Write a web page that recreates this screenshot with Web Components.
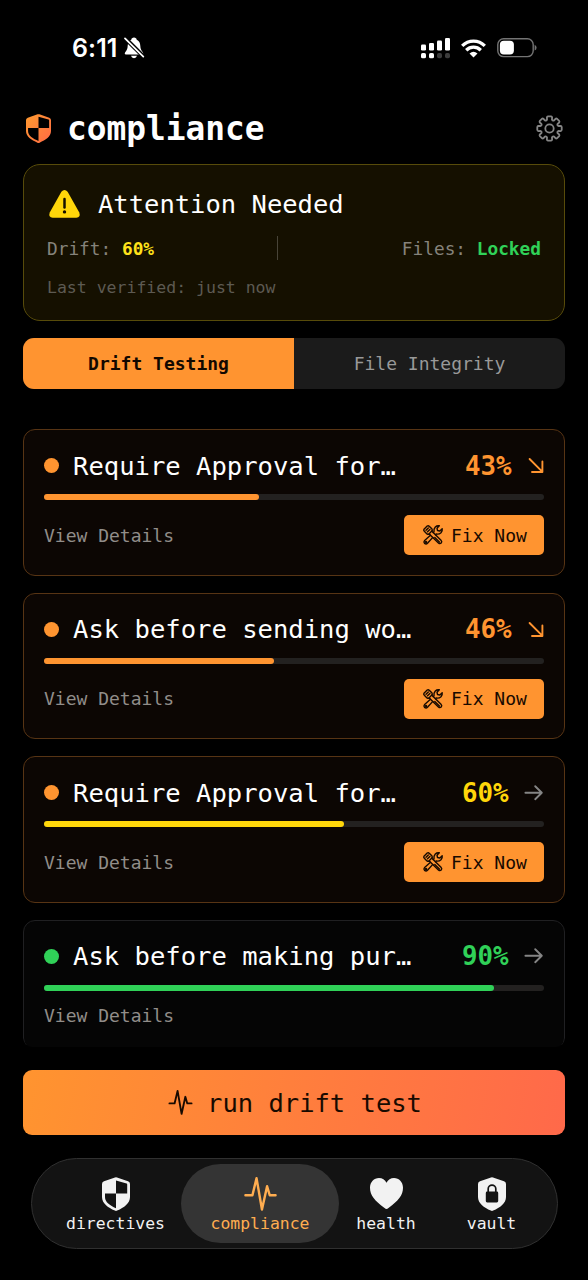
<!DOCTYPE html>
<html lang="en">
<head>
<meta charset="utf-8">
<title>compliance</title>
<style>
html,body{margin:0;background:#000}
body{width:588px;height:1280px;overflow:hidden;color:#fff;font-family:"DejaVu Sans Mono","Liberation Mono",monospace}
</style>
</head>
<body>
<compliance-app></compliance-app>
<script>
const ICONS = {
  shield: '<svg viewBox="0 0 28 34"><path fill="currentColor" fill-rule="evenodd" d="M13 .4Q14 0 15 .4L26 4.3Q28 5 28 7V20C28 26.5 22 30.5 15.2 33.6Q14 34.2 12.8 33.6C6 30.5 0 26.5 0 20V7Q0 5 2 4.3ZM14 3.4V16.4H25.2V7.4Q25.2 6.8 24.6 6.6ZM14 16.4H3V20C3 25.3 8 28.4 14 31.2Z"/></svg>',
  pulse: '<svg viewBox="0 0 33 35"><path fill="none" stroke="currentColor" stroke-width="var(--sw,2.5)" stroke-linecap="round" stroke-linejoin="round" d="M1 18.8H8.2L12.4 1.2L18 33.5L23.3 9.5L26 18.8H32"/></svg>',
  heart: '<svg viewBox="0 0 33 31"><path fill="currentColor" d="M16.5 31Q15.8 31 14.2 29.7C5 22.7 0 17.5 0 9.7C0 4 4 0 9 0C12.3 0 15 1.8 16.5 4.8C18 1.8 20.7 0 24 0C29 0 33 4 33 9.7C33 17.5 28 22.7 18.8 29.7Q17.2 31 16.5 31Z"/></svg>',
  vault: '<svg viewBox="0 0 28 34"><path fill="currentColor" d="M13 .4Q14 0 15 .4L26 4.3Q28 5 28 7V20C28 26.5 22 30.5 15.2 33.6Q14 34.2 12.8 33.6C6 30.5 0 26.5 0 20V7Q0 5 2 4.3Z"/><rect x="7.8" y="14.5" width="12.4" height="11" rx="1.4" fill="#131313"/><path d="M10.2 15V11.8C10.2 6.9 17.8 6.9 17.8 11.8V15" fill="none" stroke="#131313" stroke-width="1.7"/></svg>',
  gear: '<svg viewBox="-13.5 -13.5 27 27"><path fill="none" stroke="currentColor" stroke-width="1.8" stroke-linejoin="round" d="GEAR"/><circle r="4.2" fill="none" stroke="currentColor" stroke-width="1.8"/></svg>',
  warn: '<svg viewBox="0 0 31 28"><path fill="#ffd60a" d="M12.4 1.8Q15.5-1.8 18.6 1.8L30.3 22.6Q31.8 27.3 27.4 27.7H3.6Q-.8 27.3.7 22.6Z"/><path d="M15.5 9V17.4" stroke="#151000" stroke-width="2.5" stroke-linecap="round"/><circle cx="15.5" cy="21.9" r="1.7" fill="#151000"/></svg>',
  down: '<svg viewBox="0 0 15 15"><path fill="none" stroke="currentColor" stroke-width="1.9" stroke-linecap="round" stroke-linejoin="round" d="M.6 1L13.2 13.6M13.4 3.4V14H3"/></svg>',
  right: '<svg viewBox="0 0 19 16"><path fill="none" stroke="currentColor" stroke-width="1.9" stroke-linecap="round" stroke-linejoin="round" d="M.4 7.7H16.5M10.2 1.2L16.8 7.7L10.2 14.2"/></svg>',
  tools: '<svg viewBox="0 0 20 20"><g fill="none" stroke="currentColor" stroke-width="1.4" stroke-linejoin="round" stroke-linecap="round"><path d="M1 4.2L4.2 1Q5.3.3 6.5 1.4L9 4Q9.7 5.3 8.9 6.2L18 15.2Q19.4 16.8 18.2 18Q17 19.2 15.4 17.9L6.2 8.9Q5.2 9.7 4 8.9L1.3 6.2Q.3 5.2 1 4.2Z"/><path d="M3 5.3L5.3 3M4.5 6.8L6.9 4.5M6.2 8.7L8.8 6.1M11.8 12.5L16.4 17"/><path d="M7.5 10.3L1.6 15.5Q.3 17 1.6 18.4Q3.1 19.7 4.5 18.3L9.8 12.4M10.3 7.6L11 6.8Q10.5 4 12.3 2Q14 .4 16.3.8L14 3.2L14.5 5.5L16.8 6L19.2 3.7Q19.6 6 18 7.8Q16 9.6 13.2 9L12.5 9.8"/><circle cx="3.1" cy="16.9" r=".5"/></g></svg>',
  bell: '<svg viewBox="0 0 20 22"><path fill="#fff" d="M10 .6C8.4.6 7.4 1.6 7.3 2.8C5 3.9 3.8 6 3.7 8.7C3.6 12 2.6 13.5 1.2 15.2Q0 17.2 1.9 17.4H18.1Q20 17.2 18.8 15.2C17.4 13.5 16.4 12 16.3 8.7C16.2 6 15 3.9 12.7 2.8C12.6 1.6 11.6.6 10 .6ZM7 18.8Q7.6 21.2 10 21.2Q12.4 21.2 13 18.8Z"/><path d="M.4.4L20 20" stroke="#000" stroke-width="4.2"/><path d="M1 1.4L19.3 19.6" stroke="#fff" stroke-width="1.8" stroke-linecap="round"/></svg>',
  signal: '<svg viewBox="0 0 29 21"><g fill="#fff"><rect x="0" y="6.6" width="5" height="6" rx="1.3"/><rect x="8" y="5" width="5" height="7.6" rx="1.3"/><rect x="16" y="2.6" width="5" height="10" rx="1.3"/><rect x="24" y="0" width="5" height="12.6" rx="1.3"/><rect x="0" y="15" width="5" height="5.3" rx="1.6"/><rect x="8" y="15" width="5" height="5.3" rx="1.6"/></g><g fill="#3c3c3c"><rect x="16" y="15" width="5" height="5.3" rx="1.8"/><rect x="24" y="15" width="5" height="5.3" rx="1.8"/></g></svg>',
  wifi: '<svg viewBox="0 0 25 19"><g fill="none" stroke="#fff" stroke-width="3.3"><path d="M1.2 6.8C7.5.5 17.5.5 23.8 6.8"/><path d="M5.2 11.2C9.3 7.2 15.7 7.2 19.8 11.2"/></g><path fill="#fff" d="M8.5 14.4Q12.5 11.2 16.5 14.4L12.5 18.6Z"/></svg>',
  battery: '<svg viewBox="0 0 40 20"><rect x=".8" y=".8" width="35.4" height="17.8" rx="5.8" fill="none" stroke="#747474" stroke-width="1.4"/><rect x="2.9" y="2.8" width="14" height="13.8" rx="4" fill="#fff"/><path fill="#747474" d="M37.6 6.8Q39.6 7.8 39.6 9.7Q39.6 11.6 37.6 12.6Z"/></svg>'
};
/* Outline of an eight-toothed cog, as alternating arcs at two radii. */
(() => {
  const p = (r, a) => (r * Math.cos(a)).toFixed(2) + ' ' + (r * Math.sin(a)).toFixed(2);
  let d = '';
  for (let i = 0; i < 8; i++) {
    const a = i * Math.PI / 4;
    d += (i ? 'L' : 'M') + p(9.3, a - .27) + 'L' + p(11.4, a - .23) + 'Q' + p(12.3, a - .2) + ' ' + p(12.3, a - .12) +
      'L' + p(12.3, a + .12) + 'Q' + p(12.3, a + .2) + ' ' + p(11.4, a + .23) + 'L' + p(9.3, a + .27) +
      'Q' + p(8.1, a + .3927) + ' ' + p(9.3, a + .5154);
  }
  ICONS.gear = ICONS.gear.replace('GEAR', d + 'Z');
})();

class Base extends HTMLElement {
  connectedCallback() {
    if (this.shadowRoot) return;
    this.attachShadow({ mode: 'open' }).innerHTML = this.view();
  }
  a(n) { return this.getAttribute(n) || ''; }
}
customElements.define('ui-icon', class extends Base {
  view() { return `<style>:host{display:block;flex:none}svg{display:block;width:100%;height:100%;overflow:visible}</style>${ICONS[this.a('name')]}`; }
});
customElements.define('status-bar', class extends Base {
  view() { return `<style>
    :host{display:flex;align-items:center;height:96px;padding:0 51px 0 72px;box-sizing:border-box}
    time{font:600 25px/30px Inter,sans-serif;letter-spacing:.1px;width:51.5px}
    .sp{flex:1}
    </style><time>6:11</time><ui-icon name="bell" style="width:20px;height:22px"></ui-icon><span class="sp"></span>
    <ui-icon name="signal" style="width:29px;height:21px;margin-right:11px"></ui-icon>
    <ui-icon name="wifi" style="width:25px;height:19px;margin-right:11px"></ui-icon>
    <ui-icon name="battery" style="width:40px;height:20px"></ui-icon>`; }
});
customElements.define('page-header', class extends Base {
  view() { return `<style>
    :host{display:flex;align-items:center;height:64px;padding:0 25.5px 0 26px}
    h1{flex:1;margin:1px 0 0 16px;font-size:32.8px;line-height:40px;font-weight:700}
    .s{width:25px;height:29px}
    </style><svg class="s" viewBox="0 0 28 34" preserveAspectRatio="none"><defs><linearGradient id="g" x1="0" y1="0" x2="1" y2="1"><stop stop-color="#ff9b2f"/><stop offset="1" stop-color="#ff6a45"/></linearGradient></defs><path fill="url(#g)" fill-rule="evenodd" d="M13 .4Q14 0 15 .4L26 4.3Q28 5 28 7V20C28 26.5 22 30.5 15.2 33.6Q14 34.2 12.8 33.6C6 30.5 0 26.5 0 20V7Q0 5 2 4.3ZM14 3.2V16.4H25.9V7.2Q25.9 6.6 25.2 6.4ZM14 16.4H2.3V20C2.3 25.8 8 29 14 31.7Z"/></svg><h1><slot></slot></h1><ui-icon name="gear" style="width:27px;height:27px;color:#858585"></ui-icon>`; }
});
customElements.define('alert-card', class extends Base {
  view() { return `<style>
    :host{display:block;box-sizing:border-box;height:157px;margin:4px 23px 0;padding:19px 23px;background:#151000;border:1px solid #574b0a;border-radius:17px}
    div{display:flex;align-items:center}
    .t{height:39px;font-size:25.5px;gap:18px;padding-left:2px}
    .m{height:50px;font-size:17.8px;color:#86837b;justify-content:space-between}
    .m i{width:1px;height:24px;background:#484438}
    .m span{white-space:pre}
    b.y{color:#ffe11a}b.g{color:#30d158}
    .v{height:28px;font-size:16.5px;color:#5d5a52}
    </style><div class="t"><ui-icon name="warn" style="width:31px;height:28px"></ui-icon><span>Attention Needed</span></div>
    <div class="m"><span>Drift: <b class="y">60%</b></span><i></i><span>Files: <b class="g">Locked</b></span></div>
    <div class="v">Last verified: just now</div>`; }
});
customElements.define('segment-tabs', class extends Base {
  view() { return `<style>
    :host{display:grid;grid-template-columns:1fr 1fr;height:50.5px;margin:17px 23px 0;border-radius:11px;overflow:hidden;background:#1b1b1b;font-size:18px;line-height:52px;text-align:center;color:#999}
    b{background:#ff9430;color:#120800}
    </style><b>Drift Testing</b><span>File Integrity</span>`; }
});
customElements.define('test-card', class extends Base {
  view() {
    const ok = this.hasAttribute('ok'), d = this.a('trend') === 'down';
    return `<style>
    :host{display:block;flex:none;box-sizing:border-box;height:${ok ? 130 : 146.6}px;padding:17.5px 20px 0;border:1px solid ${ok ? '#202022' : '#573414'};border-radius:12px;background:${ok ? '#050505' : '#0c0603'}}
    .r{display:flex;align-items:center;height:36px;font-size:25.55px}
    .dot{width:15px;height:15px;border-radius:50%;background:${ok ? '#30d158' : '#ff9430'};margin-right:14px}
    .n{flex:1;white-space:nowrap}
    .p{color:${this.a('tint')};font-weight:700;font-size:25.8px;margin-right:${d ? 17.5 : 16.5}px}
    .bar{height:6px;border-radius:3px;background:#232120;margin-top:10.5px}
    .bar i{display:block;height:6px;border-radius:3px;width:${this.a('value')}%;background:${this.a('tint')}}
    .f{display:flex;align-items:center;justify-content:space-between;margin-top:${ok ? 11 : 15}px;height:${ok ? 28 : 40}px;font-size:18px;color:#918d89}
    .fix{display:flex;align-items:center;box-sizing:border-box;width:140px;height:40px;padding-left:19px;gap:8px;border-radius:5px;background:#ff9430;color:#180a00}
    </style><div class="r"><span class="dot"></span><span class="n"><slot></slot></span><span class="p">${this.a('value')}%</span>
    <ui-icon name="${d ? 'down' : 'right'}" style="width:${d ? 15 : 19}px;height:${d ? 15 : 16}px;color:${d ? '#ff9430' : '#858585'}"></ui-icon></div>
    <div class="bar"><i></i></div><div class="f"><span>View Details</span>${ok ? '' : '<span class="fix"><ui-icon name="tools" style="width:20px;height:20px"></ui-icon><span>Fix Now</span></span>'}</div>`;
  }
});
customElements.define('run-button', class extends Base {
  view() { return `<style>
    :host{display:flex;align-items:center;justify-content:center;gap:14px;height:65px;padding-left:2px;margin:23px 23px 0;border-radius:9px;background:linear-gradient(100deg,#ff942f,#ff694a);color:#180a00;font-size:25.5px;--sw:2.6}
    span{padding-top:2px}
    </style><ui-icon name="pulse" style="width:25px;height:25px"></ui-icon><span><slot></slot></span>`; }
});
customElements.define('tab-item', class extends Base {
  view() { return `<style>
    :host{display:flex;flex-direction:column;align-items:center;box-sizing:border-box;height:79px;padding-top:13px;border-radius:40px;font-size:16.45px;line-height:20px;color:#f2f2f2}
    :host([active]){background:#343434;color:#ffad50}
    .i{height:34px;display:flex;align-items:center;margin-bottom:3px}
    </style><span class="i"><ui-icon name="${this.a('icon')}" style="width:${this.a('w')}px;height:${this.a('h')}px"></ui-icon></span><span><slot></slot></span>`; }
});
customElements.define('tab-bar', class extends Base {
  view() { return `<style>
    :host{display:grid;grid-template-columns:131px 158px 94px 117px;box-sizing:border-box;margin:23.5px 30.5px 0;height:90.5px;padding:4.5px 0 0 18.5px;border:1px solid #303030;border-radius:46px;background:#131313}
    </style><slot></slot>`; }
});
customElements.define('compliance-app', class extends Base {
  view() { return `<style>
    :host{display:flex;flex-direction:column;width:588px;height:1280px;background:#000;overflow:hidden}
    .list{display:flex;flex-direction:column;gap:17px;height:617.5px;margin:40.5px 23px 0;overflow:hidden;border-radius:0 0 9px 9px}
    </style>
    <status-bar></status-bar><page-header>compliance</page-header><alert-card></alert-card><segment-tabs></segment-tabs>
    <div class="list">
    <test-card value="43" tint="#ff9430" trend="down">Require Approval for…</test-card>
    <test-card value="46" tint="#ff9430" trend="down">Ask before sending wo…</test-card>
    <test-card value="60" tint="#ffd60a">Require Approval for…</test-card>
    <test-card value="90" tint="#30d158" ok>Ask before making pur…</test-card>
    </div>
    <run-button>run drift test</run-button>
    <tab-bar><tab-item icon="shield" w="28" h="34">directives</tab-item><tab-item icon="pulse" w="33" h="34" active>compliance</tab-item><tab-item icon="heart" w="33" h="31">health</tab-item><tab-item icon="vault" w="28" h="34">vault</tab-item></tab-bar>`; }
});
</script>
</body>
</html>
